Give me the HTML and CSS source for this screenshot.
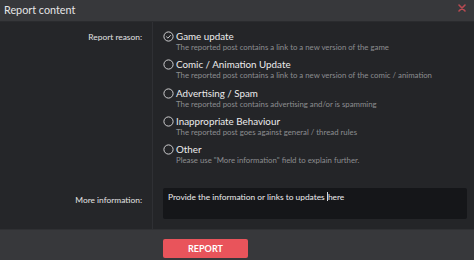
FILE: index.html
```html
<!DOCTYPE html>
<html>
<head>
<meta charset="utf-8">
<link rel="stylesheet" href="styles.css">
</head>
<body>
<div class="dialog">
  <div class="header">
    <span class="title">Report content</span>
    <svg class="close" width="8" height="8" viewBox="0 0 8 8"><path d="M1 1L7 7M7 1L1 7" stroke="#b84a52" stroke-width="1.6" stroke-linecap="round"/></svg>
  </div>
  <div class="body">
    <div class="label reason-label">Report reason:</div>
    <div class="field reason-field">
      <div class="option">
        <svg class="radio" width="11" height="11" viewBox="0 0 11 11"><circle cx="5.5" cy="5.5" r="4.6" fill="none" stroke="#cfcfd1" stroke-width="1"/><path d="M3.3 5.6L4.9 7.1L7.7 4.1" fill="none" stroke="#cfcfd1" stroke-width="1"/></svg>
        <div class="text"><div class="opt-title">Game update</div><div class="opt-desc">The reported post contains a link to a new version of the game</div></div>
      </div>
      <div class="option">
        <svg class="radio" width="11" height="11" viewBox="0 0 11 11"><circle cx="5.5" cy="5.5" r="4.6" fill="none" stroke="#cfcfd1" stroke-width="1"/></svg>
        <div class="text"><div class="opt-title">Comic / Animation Update</div><div class="opt-desc">The reported post contains a link to a new version of the comic / animation</div></div>
      </div>
      <div class="option">
        <svg class="radio" width="11" height="11" viewBox="0 0 11 11"><circle cx="5.5" cy="5.5" r="4.6" fill="none" stroke="#cfcfd1" stroke-width="1"/></svg>
        <div class="text"><div class="opt-title">Advertising / Spam</div><div class="opt-desc">The reported post contains advertising and/or is spamming</div></div>
      </div>
      <div class="option">
        <svg class="radio" width="11" height="11" viewBox="0 0 11 11"><circle cx="5.5" cy="5.5" r="4.6" fill="none" stroke="#cfcfd1" stroke-width="1"/></svg>
        <div class="text"><div class="opt-title">Inappropriate Behaviour</div><div class="opt-desc">The reported post goes against general / thread rules</div></div>
      </div>
      <div class="option">
        <svg class="radio" width="11" height="11" viewBox="0 0 11 11"><circle cx="5.5" cy="5.5" r="4.6" fill="none" stroke="#cfcfd1" stroke-width="1"/></svg>
        <div class="text"><div class="opt-title">Other</div><div class="opt-desc">Please use "More information" field to explain further.</div></div>
      </div>
    </div>
    <div class="label info-label">More information:</div>
    <div class="field info-field">
      <div class="textarea">Provide the information or links to updates <span class="caret"></span>here</div>
    </div>
  </div>
  <div class="footer">
    <button class="report">REPORT</button>
  </div>
</div>
</body>
</html>
```

FILE: styles.css
```css
* { box-sizing: border-box; }
html, body { margin: 0; padding: 0; }
body {
  width: 474px;
  height: 260px;
  background: #242528;
  font-family: Lato, "Noto Sans", sans-serif;
  overflow: hidden;
}
.dialog {
  display: flex;
  flex-direction: column;
  height: 260px;
}
.header {
  height: 22px;
  background: #37383b;
  border-bottom: 1px solid #2a2b2e;
  display: flex;
  align-items: center;
  justify-content: space-between;
  padding: 0 8px 1px 4px;
}
.title {
  color: #e6e6e7;
  font-size: 10.8px;
  line-height: 14px;
}
.close { display: block; margin-top: -5px; }
.body {
  height: 207px;
  display: grid;
  grid-template-columns: 153px 1fr;
  grid-template-rows: auto 1fr;
}
.label {
  background: #252629;
  border-right: 1px solid #2f3034;
  color: #e2e2e3;
  font-size: 8.4px;
  text-align: right;
  padding-right: 10px;
}
.reason-label { padding-top: 9px; line-height: 12px; }
.info-label { padding-top: 23px; line-height: 12px; }
.field { padding-left: 10px; padding-right: 7px; }
.reason-field { padding-top: 8px; }
.info-field { padding-top: 17px; padding-bottom: 11px; }
.option {
  display: flex;
  align-items: flex-start;
  gap: 2px;
  margin-bottom: 6px;
}
.radio { flex: none; margin-top: 1px; }
.opt-title {
  color: #ececed;
  font-size: 9.8px;
  line-height: 12px;
}
.opt-desc {
  color: #8c8d90;
  font-size: 7.8px;
  line-height: 10.3px;
}
.textarea {
  height: 31px;
  background: #151619;
  border-radius: 2px;
  color: #ececed;
  font-size: 8.4px;
  line-height: 12px;
  padding: 3px 5px;
}
.caret {
  display: inline-block;
  width: 1px;
  height: 9px;
  background: #d8d8d8;
  vertical-align: -1px;
}
.footer {
  flex: 1;
  background: #37383b;
  border-top: 1px solid #2f3033;
  padding: 6px 0 0 163px;
}
.report {
  width: 85px;
  height: 19px;
  background: #e9545b;
  border: none;
  border-radius: 2px;
  color: #ffffff;
  font-family: Lato, "Noto Sans", sans-serif;
  font-weight: bold;
  font-size: 9px;
  padding: 0;
}
```
